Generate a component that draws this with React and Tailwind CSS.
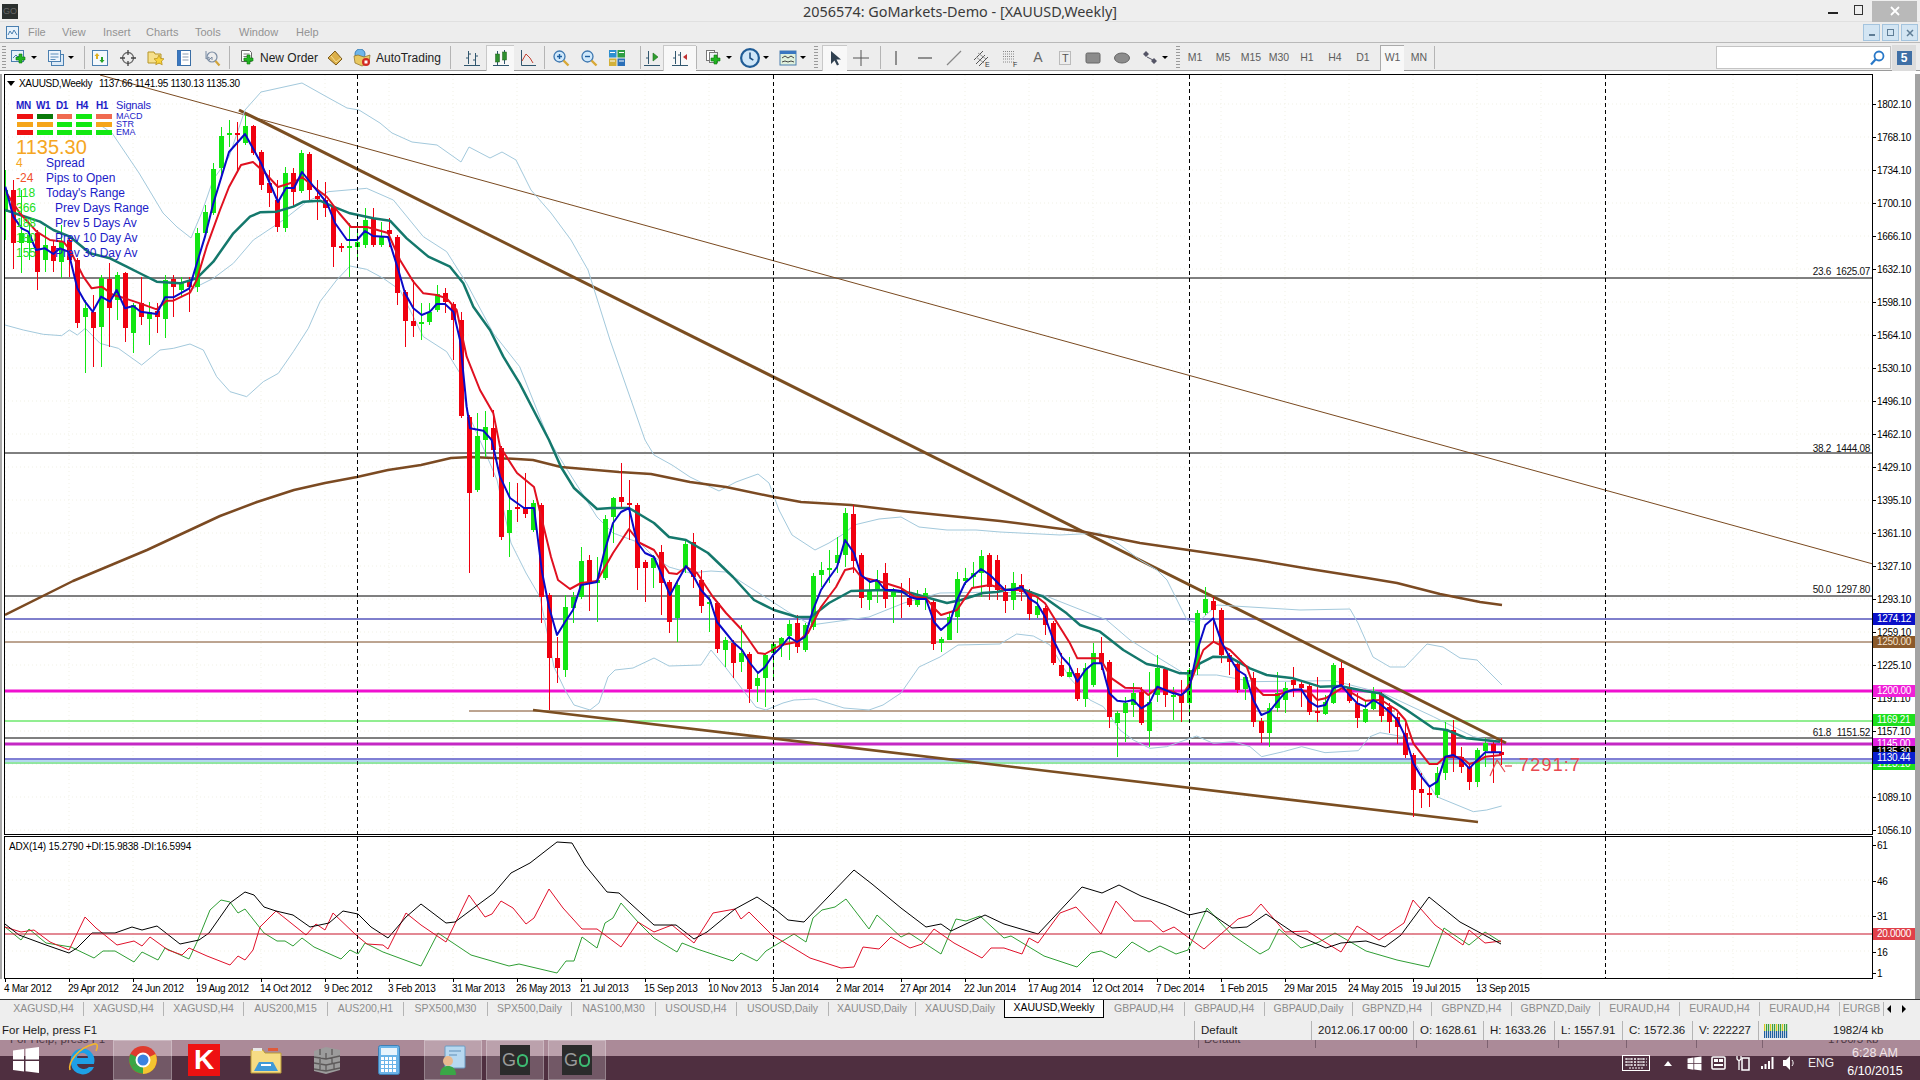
import React from "react";

const z10 = (a) => a.map(([x, y]) => [x / 3, 180 + y / 3]);
const z11 = (a) => a.map(([x, y]) => [1000 + x / 3, 560 + y / 3]);

const CANDLES = [
[1,190,212,170,240],[0,190,243,180,269],[1,233,243,190,273],[1,235,243,225,260],[0,233,272,230,290],[1,245,260,227,272],[0,246,261,240,272],[1,242,262,225,278],
[0,240,260,237,277],[0,260,323,258,328],[1,308,317,300,373],[0,312,328,295,367],[1,278,327,275,367],[0,279,308,263,347],[1,275,300,272,320],[0,273,328,272,342],
[1,305,333,303,353],[0,303,317,277,325],[1,312,319,302,345],[0,311,317,303,333],[1,280,319,275,338],[0,279,287,275,317],[1,282,290,277,297],[0,282,287,277,312],
[1,233,287,228,292],[1,212,233,205,235],[1,169,213,163,215],[1,136,168,127,179],[1,133,135,120,147],[0,133,135,122,170],[1,126,143,115,145],[0,126,153,125,155],
[0,152,185,150,190],[0,183,193,170,207],[0,200,227,180,232],[1,173,228,167,232],[0,173,192,168,207],[1,153,191,150,193],[0,154,190,152,200],[0,196,199,180,220],
[0,200,208,182,217],[0,207,247,205,267],[0,246,248,243,252],[1,246,248,223,277],[1,242,247,223,260],[1,220,245,208,248],[0,218,245,208,247],[1,237,245,222,247],
[0,230,234,218,247],[0,237,293,235,305],[0,292,321,290,347],[0,321,326,280,337],[1,322,323,303,340],[1,312,322,303,325],[1,294,310,285,312],[0,293,302,288,313],
[0,304,320,302,360],[0,320,416,312,418],[0,417,493,415,573],[1,436,490,413,492],[1,427,440,411,457],[0,428,450,410,477],[0,448,537,446,540],[1,510,533,482,557],
[0,507,509,483,522],[0,507,514,473,518],[1,503,530,500,532],[0,505,597,503,623],[0,595,658,593,710],[0,658,668,637,683],[1,607,670,595,677],[1,597,608,592,623],
[1,561,597,547,599],[0,560,583,555,611],[1,580,583,557,622],[1,519,578,515,580],[1,498,517,497,543],[0,497,502,463,507],[0,503,504,480,540],[0,505,568,503,590],
[0,562,568,560,602],[1,558,568,555,588],[0,552,583,545,615],[0,582,622,580,633],[1,585,618,580,642],[1,544,568,540,573],[0,542,577,533,588],[0,580,606,570,613],
[1,602,604,597,632],[0,603,649,601,653],[1,640,650,637,667],[0,643,663,640,678],[1,653,662,625,672],[0,654,689,652,703],[1,678,686,673,702],[1,655,678,653,707],
[1,644,653,643,677],[1,638,646,637,657],[1,624,636,620,660],[0,623,647,615,653],[1,625,650,623,652],[1,576,627,573,630],[1,570,575,562,587],[1,568,569,550,583],
[1,555,563,537,573],[1,513,555,508,567],[0,514,561,505,573],[0,555,598,553,608],[1,590,600,578,610],[1,580,590,570,603],[0,573,599,563,608],[1,590,597,588,623],
[0,590,592,583,618],[0,598,605,578,607],[1,600,605,590,607],[1,593,598,588,610],[0,602,644,600,650],[1,639,643,637,652],[1,617,640,613,640],[1,579,617,572,633],
[1,578,581,568,585],[1,573,577,562,587],[1,556,573,550,597],[0,555,587,553,600],[0,560,590,555,600],[0,592,601,585,613],[1,583,600,572,610],[0,585,592,574,601],
[0,591,614,589,620],[1,606,615,595,618],[0,608,625,606,635],[0,623,663,621,665],[0,665,676,653,677],[1,672,677,657,677],[0,673,699,668,701],[1,668,699,663,707],
[1,653,685,643,687],[0,653,663,637,670],[0,662,717,660,728],[1,713,723,711,757],[1,703,713,697,742],[1,693,705,683,717],[0,692,723,687,725],[1,702,731,672,747],
[1,668,695,655,702],[0,669,695,667,707],[1,695,697,687,720],[0,695,703,680,722],[1,670,703,668,713],[1,613,669,610,675],[1,599,613,587,615],[0,601,610,597,642],
[0,610,655,608,663],[0,655,662,653,675],[0,664,690,663,693],[1,677,689,675,700],[0,678,722,672,727],[0,721,733,718,743],[1,708,733,703,747],[1,693,708,672,712],
[1,688,700,682,713],[0,680,685,667,697],[0,684,688,682,707],[0,686,712,683,715],[0,711,712,677,722],[1,702,714,695,715],[1,665,703,663,704],[0,668,685,662,687],
[0,687,701,683,703],[0,703,718,693,728],[1,709,722,700,723],[1,693,709,687,710],[0,694,716,692,722],[0,707,722,703,733],[0,717,727,713,744],[0,733,755,723,758],
[0,755,790,753,817],[0,789,793,773,808],[0,793,795,787,807],[1,773,795,767,798],[1,730,773,722,780],[0,730,757,720,772],[0,757,767,747,773],[0,767,782,763,790],
[1,750,782,748,787],[1,743,751,738,767],[0,744,752,742,783],[0,752,755,738,765],
];

const BLUE = [
...z10([[16,20],[40,110],[65,145],[85,155],[108,210],[135,205],[160,222],[180,205],[205,215],[232,325],[255,365],[278,395],[303,350],[330,365],[350,330],[375,385],[400,378],[422,395],[470,402],[495,352],[520,352],[568,325],[592,245],[615,170],[640,70]]),
[229,152],[245,134],[261,163],[278,202],[286,188],[294,188],[302,172],[310,182],[327,203],[335,223],[347,240],[357,240],[365,231],[373,236],[388,237],
...z10([[1195,270],[1215,340],[1240,385],[1265,405],[1290,395],[1310,372],[1335,372],[1360,395],[1380,480],[1400,680],[1410,745],[1450,752],[1475,780],[1500,890]]),
[510,498],[524,508],[534,508],[542,572],[549,607],[557,635],[565,622],[573,610],[581,585],[597,582],[604,553],[613,523],[621,512],[629,508],[637,542],[645,553],[654,557],[661,573],[670,595],[677,582],[686,566],[694,577],[701,590],[710,600],[717,622],[726,633],[734,643],[742,650],[750,663],[758,673],[765,667],[773,655],[781,647],[789,637],[797,642],[805,637],[813,610],[821,590],[829,578],[837,567],[845,540],[854,553],[861,575],[870,582],[877,580],[885,590],[894,590],[901,591],[910,597],[917,599],[926,599],[934,622],[941,630],[950,622],[957,600],[965,583],[974,575],[981,569],[990,575],[997,582],
...z11([[15,90],[40,90],[65,80],[87,115],[111,130],[135,170],[160,240],[185,290],[208,315],[232,365],[256,330],[280,310],[304,310],[328,400],[352,422],[376,425],[400,420],[424,445],[448,430],[472,380],[496,390],[520,400],[544,405],[568,385],[592,270],[616,195],[640,175],[664,245],[688,290],[712,330],[736,345],[760,420],[784,465],[808,455],[832,425],[856,397],[880,390],[904,388],[928,425],[952,440],[976,435],[1000,385],[1024,375],[1048,405],[1072,430],[1096,440],[1120,420],[1144,435],[1168,455],[1192,480],[1216,530],[1240,610],[1264,650],[1288,680],[1312,665],[1336,590],[1360,585],[1384,600],[1408,625],[1432,600],[1456,577],[1504,577]]),
];

const RED = [
...z10([[20,40],[60,100],[110,155],[150,180],[190,185],[210,210],[250,290],[275,325],[305,320],[340,345],[375,355],[420,370],[470,388],[500,362],[520,362],[570,338],[590,300],[620,200],[660,90]]),
[229,187],[241,165],[253,162],[265,173],[278,187],[294,182],[302,177],[314,187],[327,197],[339,213],[351,227],[367,227],[388,233],
...z10([[1200,240],[1240,305],[1270,340],[1310,345],[1340,355],[1370,390],[1400,530],[1440,630],[1480,700],[1500,800]]),
[517,473],[534,487],[542,520],[551,557],[558,580],[570,589],[581,583],[597,581],[613,553],[629,529],[640,543],[654,550],[669,573],[677,574],[686,567],[697,573],[713,597],[726,613],[742,630],[758,653],[765,654],[781,645],[797,642],[808,633],[821,607],[836,587],[845,570],[854,568],[861,577],[885,583],[901,588],[915,597],[926,598],[934,608],[941,615],[957,610],[972,588],[990,585],[997,587],
...z11([[15,90],[60,90],[110,110],[135,130],[160,170],[210,250],[232,295],[300,295],[335,355],[375,383],[420,385],[445,405],[470,385],[520,395],[544,410],[570,370],[610,270],[640,245],[690,270],[740,320],[760,375],[790,405],[832,405],[880,388],[928,395],[952,420],[976,415],[1024,385],[1048,395],[1096,422],[1144,420],[1190,450],[1216,480],[1240,550],[1288,612],[1312,612],[1336,590],[1384,592],[1408,612],[1432,605],[1456,590],[1504,585]]),
];

const TEAL = [
...z10([[15,90],[60,105],[120,125],[160,150],[210,170],[270,220],[330,235],[380,260],[430,285],[470,305],[540,310],[590,295],[640,245],[700,160],[750,110],[780,97],[830,95],[880,80],[910,65],[960,62],[1000,80],[1050,100],[1120,115],[1170,122],[1220,175],[1285,230],[1350,260],[1390,310],[1420,380],[1470,450],[1510,530],[1559,610]]),
[549,440],[561,467],[574,488],[597,509],[611,508],[629,508],[654,523],[669,537],[686,540],[708,553],[733,577],[754,600],[774,610],[797,617],[811,617],[829,603],[851,591],[883,590],[911,593],[947,603],[961,600],[983,593],[997,592],
...z11([[15,90],[60,85],[130,110],[200,160],[240,195],[300,215],[370,270],[440,312],[490,322],[540,340],[570,340],[600,310],[640,290],[690,292],[750,325],[800,345],[880,355],[960,380],[1020,378],[1090,392],[1140,400],[1220,450],[1300,505],[1340,510],[1400,535],[1500,545]]),
];

const MA = [[5,615],[73,581],[147,550],[220,516],[257,502],[294,490],[325,483],[357,477],[388,470],[421,465],[451,458],[471,457],[517,459],[533,460],[561,467],[619,472],[651,474],[690,482],[726,487],[774,497],[801,502],[851,505],[901,511],[1000,521],[1085,532],[1140,543],[1257,560],[1310,569],[1367,578],[1397,583],[1440,594],[1480,602],[1502,605]];

const UPPER = [[100,125],[112,133],[139,173],[163,213],[177,227],[191,238],[202,212],[213,180],[229,157],[245,110],[261,92],[302,83],[327,97],[347,108],[359,110],[380,123],[392,133],[412,142],[437,145],[461,162],[469,147],[490,158],[502,152],[516,160],[531,190],[551,213],[571,240],[588,270],[610,340],[645,440],[654,455],[672,465],[690,477],[719,491],[736,482],[758,474],[769,483],[779,510],[792,535],[815,550],[829,543],[845,533],[854,525],[879,519],[901,517],[919,527],[947,530],[976,530],[1000,532],[1060,535],[1100,533],[1120,545],[1140,560],[1157,570],[1167,580],[1187,620],[1197,623],[1217,605],[1267,608],[1300,610],[1350,609],[1358,623],[1373,657],[1390,667],[1405,667],[1427,644],[1443,647],[1460,658],[1477,660],[1490,673],[1502,685]];

const MIDDLE = [
...z10([[570,330],[640,295],[700,250],[760,180],[850,120],[920,65],[985,35],[1100,25],[1180,60],[1270,170],[1340,215],[1400,310],[1480,460],[1559,560]]),
[549,440],[563,463],[597,517],[613,533],[640,543],[654,557],[669,567],[690,573],[711,571],[726,572],[754,590],[790,613],[811,625],[869,617],[904,603],[940,593],[1000,592],
...z11([[130,105],[320,180],[390,240],[470,290],[560,345],[650,345],[760,365],[1000,362],[1150,400],[1300,470],[1420,530],[1500,545]]),
];

const LOWER = [
...z10([[15,435],[70,450],[130,463],[185,467],[208,450],[232,465],[256,445],[300,490],[355,505],[425,555],[480,510],[520,505],[570,492],[610,510],[650,590],[690,635],[740,650],[790,605],[835,580],[880,515],[925,445],[960,365],[1010,300],[1050,258],[1100,268],[1150,295],[1200,330],[1270,470],[1340,515],[1380,580],[1400,690],[1470,850]]),
[497,480],[511,543],[526,573],[540,597],[554,667],[565,690],[574,705],[590,710],[599,703],[608,677],[615,670],[633,668],[654,658],[669,666],[701,665],[711,650],[726,668],[756,707],[766,710],[783,703],[794,700],[815,699],[844,708],[869,710],[883,705],[901,693],[919,667],[940,657],[958,645],[1000,644],
...z11([[50,222],[100,228],[150,255],[210,355],[270,420],[310,440],[360,510],[400,540],[450,565],[500,560],[590,528],[640,550],[700,545],[750,560],[785,590],[850,575],[905,560],[975,578],[1075,572],[1110,530],[1140,518],[1210,530],[1240,600],[1310,710],[1420,755],[1460,750],[1505,738]]),
];

const ADX_BLACK = [[5,924],[19,935],[46,945],[69,953],[77,948],[92,933],[115,933],[132,927],[142,930],[157,926],[180,944],[199,940],[209,933],[230,903],[245,892],[254,895],[264,907],[276,911],[293,915],[310,927],[329,923],[343,911],[358,914],[371,927],[388,938],[406,917],[421,904],[446,923],[455,922],[475,907],[494,893],[511,873],[530,863],[557,842],[572,843],[585,865],[607,892],[619,893],[654,925],[676,925],[694,939],[707,932],[735,909],[757,897],[776,910],[788,920],[804,922],[854,870],[872,884],[901,908],[926,927],[941,924],[951,931],[985,915],[1004,924],[1038,934],[1082,887],[1102,893],[1119,885],[1141,896],[1166,905],[1189,915],[1207,911],[1232,928],[1247,927],[1266,914],[1297,935],[1326,948],[1341,943],[1366,941],[1385,947],[1401,935],[1429,897],[1460,922],[1501,944]];
const ADX_RED = [[5,927],[21,932],[34,930],[50,942],[69,950],[85,917],[96,928],[117,945],[134,941],[142,946],[150,937],[168,950],[182,955],[189,948],[207,956],[230,965],[238,956],[245,960],[253,950],[260,927],[276,911],[306,935],[316,924],[325,930],[333,913],[356,935],[367,944],[383,945],[388,949],[406,913],[421,925],[446,942],[469,895],[485,917],[492,914],[501,901],[513,908],[526,924],[534,918],[549,889],[563,908],[582,929],[597,929],[621,947],[638,922],[654,932],[672,925],[694,943],[713,913],[735,909],[741,919],[749,912],[772,935],[810,958],[841,968],[854,967],[863,947],[879,949],[891,937],[910,948],[922,944],[934,929],[954,943],[982,958],[991,948],[1004,948],[1022,954],[1029,938],[1038,943],[1060,913],[1076,907],[1101,934],[1116,901],[1134,921],[1151,921],[1163,932],[1174,927],[1204,949],[1238,919],[1251,915],[1261,904],[1285,932],[1307,931],[1341,952],[1357,926],[1379,940],[1404,923],[1413,900],[1435,925],[1463,945],[1469,930],[1485,943],[1501,941]];
const ADX_GREEN = [[5,927],[21,940],[29,929],[46,943],[71,947],[94,958],[103,951],[115,951],[134,962],[142,952],[158,960],[165,948],[189,959],[197,942],[210,910],[221,900],[230,902],[238,913],[245,909],[264,933],[277,941],[285,941],[293,946],[302,938],[314,947],[341,959],[350,950],[358,954],[365,943],[383,952],[421,966],[438,933],[471,955],[509,966],[519,964],[557,973],[566,961],[574,961],[582,937],[597,948],[605,923],[613,918],[621,903],[638,922],[654,938],[677,952],[682,943],[697,949],[733,961],[741,953],[757,961],[766,951],[794,934],[806,942],[813,918],[822,910],[835,907],[846,899],[869,929],[877,915],[901,937],[909,933],[941,954],[956,919],[966,921],[980,916],[1004,938],[1011,936],[1044,956],[1077,967],[1091,953],[1101,951],[1116,958],[1132,942],[1149,952],[1160,946],[1176,954],[1188,950],[1207,908],[1232,935],[1260,954],[1269,949],[1279,929],[1301,948],[1319,942],[1335,933],[1366,951],[1397,960],[1429,967],[1444,928],[1469,945],[1485,932],[1501,942]];

const PRICES = ["1802.10","1768.10","1734.10","1700.10","1666.10","1632.10","1598.10","1564.10","1530.10","1496.10","1462.10","1429.10","1395.10","1361.10","1327.10","1293.10","1259.10","1225.10","1191.10","1157.10","1123.10","1089.10","1056.10"];
const DATES = ["4 Mar 2012","29 Apr 2012","24 Jun 2012","19 Aug 2012","14 Oct 2012","9 Dec 2012","3 Feb 2013","31 Mar 2013","26 May 2013","21 Jul 2013","15 Sep 2013","10 Nov 2013","5 Jan 2014","2 Mar 2014","27 Apr 2014","22 Jun 2014","17 Aug 2014","12 Oct 2014","7 Dec 2014","1 Feb 2015","29 Mar 2015","24 May 2015","19 Jul 2015","13 Sep 2015"];

const TABS = [
["XAGUSD,H4","w-[80px]"],["XAGUSD,H4","w-[80px]"],["XAGUSD,H4","w-[80px]"],["AUS200,M15","w-[84px]"],["AUS200,H1","w-[76px]"],["SPX500,M30","w-[84px]"],["SPX500,Daily","w-[84px]"],["NAS100,M30","w-[84px]"],
["USOUSD,H4","w-[81px]"],["USOUSD,Daily","w-[92px]"],["XAUUSD,Daily","w-[87px]"],["XAUUSD,Daily","w-[88px]"],["XAUUSD,Weekly","w-[100px]",true],
["GBPAUD,H4","w-[81px]"],["GBPAUD,H4","w-[80px]"],["GBPAUD,Daily","w-[88px]"],["GBPNZD,H4","w-[79px]"],["GBPNZD,H4","w-[80px]"],["GBPNZD,Daily","w-[88px]"],["EURAUD,H4","w-[80px]"],["EURAUD,H4","w-[80px]"],["EURAUD,H4","w-[80px]"],["EURGB","w-[44px]"],
];

const Line = ({ pts, stroke, w = 1 }) => (
  <polyline points={pts.map((p) => p.join(",")).join(" ")} fill="none" stroke={stroke} strokeWidth={w} strokeLinejoin="round" />
);
const HL = ({ y, c, w = 1, x1 = 4, x2 = 1873 }) => <line x1={x1} x2={x2} y1={y} y2={y} stroke={c} strokeWidth={w} />;
const VDash = ({ y1, y2 }) => (
  <>
    {[357.5, 773.5, 1189.5, 1605.5].map((x) => (
      <line key={x} x1={x} x2={x} y1={y1} y2={y2} stroke="#000" strokeDasharray="4 3" />
    ))}
  </>
);
const Grid = ({ y1, y2, ys }) => (
  <g stroke="#f1f1e6" strokeDasharray="1 3">
    {Array.from({ length: 29 }, (_, i) => (
      <line key={i} x1={5 + 64 * i} x2={5 + 64 * i} y1={y1} y2={y2} />
    ))}
    {ys.map((y) => (
      <line key={y} x1={4} x2={1873} y1={y} y2={y} />
    ))}
  </g>
);

const FIBS = [["23.6","1625.07",275],["38.2","1444.08",452],["50.0","1297.80",593],["61.8","1151.52",736]];

function MainChart() {
  return (
    <svg viewBox="5 75 1867 759" className="w-full h-full block">
      <Grid y1={75} y2={834} ys={PRICES.map((_, i) => 104 + 33 * i)} />
      <HL y={278} c="#000" />
      <HL y={453} c="#000" />
      <HL y={596} c="#000" />
      <HL y={619} c="#00009a" />
      <HL y={642} c="#7b4a22" />
      <HL y={691} c="#f010d0" w={3} />
      <HL y={711} c="#7b4a22" x1={469} x2={1395} />
      <HL y={721} c="#25dd25" />
      <HL y={738} c="#000" />
      <HL y={744} c="#c428c4" w={3} />
      <HL y={759} c="#0000aa" />
      <HL y={761} c="#6ab0e0" />
      <HL y={763} c="#25cc45" />
      <line x1={100} y1={75} x2={1873} y2={564} stroke="#7a4a20" strokeWidth={1} />
      <line x1={239} y1={110} x2={1506} y2={743} stroke="#7b4e21" strokeWidth={3} />
      <line x1={533} y1={710} x2={1478} y2={822} stroke="#7b4e21" strokeWidth={2.6} />
      <g strokeWidth={1}>
        <Line pts={UPPER} stroke="#a3c9dc" />
        <Line pts={MIDDLE} stroke="#a3c9dc" />
        <Line pts={LOWER} stroke="#a3c9dc" />
      </g>
      <Line pts={MA} stroke="#7b4a22" w={2.5} />
      <g shapeRendering="crispEdges">
        {CANDLES.map(([g, t, b, h, l], i) => {
          const x = 5 + 8 * i;
          const c = g ? "#12e612" : "#f00010";
          return (
            <g key={i}>
              <line x1={x + 0.5} x2={x + 0.5} y1={h} y2={l} stroke={c} />
              <rect x={x - 2} y={t} width={5} height={Math.max(b - t, 1.5)} fill={c} />
            </g>
          );
        })}
      </g>
      <Line pts={TEAL} stroke="#14786c" w={2.5} />
      <Line pts={RED} stroke="#e01020" w={2} />
      <Line pts={BLUE} stroke="#0a0ac8" w={2} />
      <polyline points="1490,776 1497,760 1505,772" fill="none" stroke="#e8484f" strokeWidth={1.2} />
      <line x1={1505} x2={1512} y1={766} y2={766} stroke="#e8484f" strokeWidth={1.2} />
      <text x={1519} y={771} fontSize={18} letterSpacing={1.2} fill="#e8484f">7291:7</text>
      <VDash y1={75} y2={834} />
      {FIBS.map(([a, b, y]) => (
        <g key={a} fontSize={10} letterSpacing={-0.3} fill="#111">
          <text x={1870} y={y} textAnchor="end">{b}</text>
          <text x={1831} y={y} textAnchor="end">{a}</text>
        </g>
      ))}
    </svg>
  );
}

function AdxChart() {
  return (
    <svg viewBox="5 837 1867 141" className="w-full h-full block">
      <Grid y1={837} y2={978} ys={[880, 916, 951]} />
      <Line pts={ADX_GREEN} stroke="#2f9e34" />
      <Line pts={ADX_RED} stroke="#e0102a" />
      <Line pts={ADX_BLACK} stroke="#000" />
      <HL y={934} c="#c8142a" w={1.2} />
      <VDash y1={837} y2={978} />
    </svg>
  );
}

const BOXES = [
  ["bg-[#ee1111]","bg-[#0a7a0a]","bg-[#f06a50]","bg-[#12e812]","bg-[#f06a50]"],
  ["bg-[#f5a51a]","bg-[#f5a51a]","bg-[#12e812]","bg-[#12e812]","bg-[#f5a51a]"],
  ["bg-[#ee1111]","bg-[#12e812]","bg-[#12e812]","bg-[#12e812]","bg-[#12e812]"],
];
const STATS = [
  ["4","text-[#f5a623]","Spread",""],
  ["-24","text-[#f0502a]","Pips to Open",""],
  ["118","text-[#22e022]","Today's Range",""],
  ["366","text-[#22e022]","Prev Days Range","pl-[9px]"],
  ["188","text-[#22e022]","Prev 5 Days Av","pl-[9px]"],
  ["180","text-[#22e022]","Prev 10 Day Av","pl-[9px]"],
  ["155","text-[#22e022]","Prev 30 Day Av","pl-[9px]"],
];

function Legend() {
  return (
    <div className="absolute left-[2px] top-0 w-[260px] pointer-events-none">
      <div className="flex items-center h-[16px] text-[10px] tracking-[-0.3px] text-black">
        <span className="mr-[4px] w-0 h-0 border-x-[4px] border-x-transparent border-t-[5px] border-t-black" />
        <span className="w-[80px]">XAUUSD,Weekly</span>
        <span>1137.66 1141.95 1130.13 1135.30</span>
      </div>
      <div className="pl-[9px] mt-[8px] text-[#1c1cc8]">
        <div className="flex items-center h-[13px] text-[10px]">
          {["MN","W1","D1","H4","H1"].map((t) => (
            <span key={t} className="w-[20px] font-bold tracking-[-0.4px]">{t}</span>
          ))}
          <span className="text-[11px] tracking-[-0.2px]">Signals</span>
        </div>
        {BOXES.map((row, r) => (
          <div key={r} className="flex items-center h-[8px]">
            <div className="flex w-[100px] pl-[1px]">
              {row.map((c, i) => (
                <span key={i} className={`w-[16px] h-[5px] mr-[4px] ${c}`} />
              ))}
            </div>
            <span className="text-[9px] leading-[8px]">{["MACD","STR","EMA"][r]}</span>
          </div>
        ))}
      </div>
      <div className="pl-[9px] text-[20px] leading-[22px] text-[#f5a623]">1135.30</div>
      <div className="pl-[9px] -mt-[3px] text-[12px]">
        {STATS.map(([v, c, l, p]) => (
          <div key={l} className="flex items-center h-[15px]">
            <span className={`w-[30px] ${c}`}>{v}</span>
            <span className={`text-[#1c1cc8] ${p}`}>{l}</span>
          </div>
        ))}
      </div>
    </div>
  );
}

const PriceTag = ({ top, bg, fg = "text-white", children }) => (
  <div className={`absolute left-0 w-[42px] h-[12px] pl-[4px] text-[10px] leading-[12px] tracking-[-0.3px] ${top} ${bg} ${fg}`}>{children}</div>
);

function PriceAxis() {
  return (
    <div className="relative h-full w-[42px] bg-white text-[10px] tracking-[-0.3px] text-black">
      <div className="pt-[13.5px]">
        {PRICES.map((p) => (
          <div key={p} className="flex items-center h-[33px]">
            <span className="w-[3px] h-px bg-black mr-[1px]" />
            <span>{p}</span>
          </div>
        ))}
      </div>
      <PriceTag top="top-[539px]" bg="bg-[#0a10c8]">1274.12</PriceTag>
      <PriceTag top="top-[562px]" bg="bg-[#8b5a2b]" fg="text-[#f3e4d0]">1250.00</PriceTag>
      <PriceTag top="top-[611px]" bg="bg-[#f01fd8]">1200.00</PriceTag>
      <PriceTag top="top-[640px]" bg="bg-[#1ee01e]">1169.21</PriceTag>
      <PriceTag top="top-[664px]" bg="bg-[#e020e0]">1145.00</PriceTag>
      <PriceTag top="top-[672px]" bg="bg-[#000]">1135.30</PriceTag>
      <PriceTag top="top-[684px]" bg="bg-[#1ee01e]">1123.10</PriceTag>
      <PriceTag top="top-[678px]" bg="bg-[#0a1fd0]">1130.44</PriceTag>
    </div>
  );
}

function AdxAxis() {
  return (
    <div className="relative flex flex-col h-full w-[42px] text-[10px] tracking-[-0.3px] text-black">
      <div className="-mt-[8px]">
        {["61","46","31","16"].map((p) => (
          <div key={p} className="flex items-center h-[35.5px]">
            <span className="w-[3px] h-px bg-black mr-[1px]" />
            <span>{p}</span>
          </div>
        ))}
        <div className="flex items-center h-[6px]">
          <span className="w-[3px] h-px bg-black mr-[1px]" />
          <span>1</span>
        </div>
      </div>
      <PriceTag top="top-[92px]" bg="bg-[#e0404a]">20.0000</PriceTag>
    </div>
  );
}

/* ---------- toolbar icons ---------- */
const Svg = ({ s = 18, children }) => (
  <svg width={s} height={s} viewBox="0 0 18 18" className="block shrink-0">{children}</svg>
);
const Plus = ({ x = 9, y = 9 }) => (
  <path d={`M${x + 3} ${y}h3v3h3v3h-3v3h-3v-3h-3v-3h3z`} fill="#22b422" stroke="#0c7a0c" strokeWidth=".6" />
);
const Caret = () => <span className="w-0 h-0 border-x-[3px] border-x-transparent border-t-[3px] border-t-black" />;
const IconNewChart = () => (
  <Svg><rect x="1.5" y="1.5" width="12" height="11" fill="#e8f2fb" stroke="#4a7fb0" /><path d="M3 9l3-3 2 2 3-3" stroke="#4a7fb0" fill="none" /><Plus x={6} y={5} /></Svg>
);
const IconProfile = () => (
  <Svg><rect x="4.5" y="5.5" width="12" height="11" fill="#dceaf7" stroke="#4a7fb0" /><rect x="1.5" y="1.5" width="12" height="11" fill="#eef5fc" stroke="#4a7fb0" /><path d="M3.5 5h8M3.5 8h8M3.5 10.5h5" stroke="#5c8dbb" /></Svg>
);
const IconMarket = () => (
  <Svg><rect x="1.5" y="1.5" width="15" height="15" fill="#f4f9fd" stroke="#4a7fb0" /><path d="M6 4l2.5 3h-1.5v3H5V7H3.5z" fill="#e0b020" /><path d="M11 14l-2.5-3H10V8h2v3h1.5z" fill="#27a327" /></Svg>
);
const IconNav = () => (
  <Svg><circle cx="9" cy="9" r="5.5" fill="none" stroke="#666" strokeWidth="1.3" /><path d="M9 1v5M9 12v5M1 9h5M12 9h5" stroke="#444" strokeWidth="1.3" /></Svg>
);
const IconStar = () => (
  <Svg><path d="M1 3h6l1 2h6v9H1z" fill="#f6e08c" stroke="#b59528" /><path d="M12 6l1.6 3.4 3.4.4-2.5 2.4.7 3.6-3.2-1.8-3.2 1.8.7-3.6L7 9.800l3.4-.4z" fill="#f8d33c" stroke="#b38a14" strokeWidth=".7" /></Svg>
);
const IconData = () => (
  <Svg><rect x="2.500" y="1.500" width="13" height="15" fill="#fff" stroke="#3a6ea5" /><rect x="2.500" y="1.500" width="3.500" height="15" fill="#3a77c0" /><path d="M7.500 5h6M7.500 8h6M7.500 11h6" stroke="#8a9bb0" /></Svg>
);
const IconTester = () => (
  <Svg><path d="M3 2v8l3-2v3l3-3v3" stroke="#7a8aa0" fill="#e8eef6" strokeWidth="1" /><circle cx="9" cy="8" r="5" fill="none" stroke="#7c8da3" strokeWidth="1.2" /><path d="M12.500 12l4 4.500" stroke="#d2a43a" strokeWidth="2.200" /></Svg>
);
const IconOrder = () => (
  <Svg><path d="M3.500 1.500h8l2 2v9h-10z" fill="#fff" stroke="#666" /><path d="M5.500 5h6M5.500 7.500h6M5.500 10h4" stroke="#777" /><Plus x={6} y={6} /></Svg>
);
const IconGold = () => (
  <Svg><path d="M9 2l7 8-6 6-8-7z" fill="#dcb04a" stroke="#7d5a18" /><path d="M5 7l5 6 5-4" fill="none" stroke="#f5e09a" /></Svg>
);
const IconAuto = () => (
  <Svg><circle cx="7" cy="5" r="5" fill="#6fb6ea" stroke="#3d7fb5" /><path d="M1 7l4-1 6 2 6-2-1 8-7 3-7-3z" fill="#e8c861" stroke="#8a6a20" strokeWidth=".7" /><circle cx="13" cy="13" r="4" fill="#d22a22" /><rect x="11.500" y="11.500" width="3" height="3" fill="#fff" /></Svg>
);
const IconBars = () => (
  <Svg><path d="M5.500 2v13M3 9h2.500M5.500 5H8M12.500 4v13M10 11h2.500M12.500 7H15M1 16.500h16" stroke="#30566e" fill="none" /></Svg>
);
const IconCandle = () => (
  <Svg><path d="M5.500 2v14M12.500 1v14M1 16.500h16" stroke="#30566e" /><rect x="3.500" y="5" width="4" height="8" fill="#2e8f2e" stroke="#1f5f1f" strokeWidth=".5" /><rect x="10.500" y="3" width="4" height="8" fill="#2e8f2e" stroke="#1f5f1f" strokeWidth=".5" /></Svg>
);
const IconLineChart = () => (
  <Svg><path d="M2.500 1v15.500H17" stroke="#30566e" fill="none" /><path d="M3 12l4-7 4 4 3 5" stroke="#c04030" fill="none" /></Svg>
);
const IconZoom = ({ plus }) => (
  <Svg><circle cx="7.500" cy="7.500" r="5.500" fill="#cfe8fb" stroke="#3f78b0" strokeWidth="1.300" /><path d={plus ? "M5 7.500h5M7.500 5v5" : "M5 7.500h5"} stroke="#1f5fa0" strokeWidth="1.400" /><path d="M11.500 11.500l5 5" stroke="#d8a836" strokeWidth="2.400" /></Svg>
);
const IconTile = () => (
  <Svg><rect x="1" y="1" width="7.500" height="7.500" fill="#2e8fd0" /><rect x="9.500" y="1" width="7.500" height="7.500" fill="#2f9e44" /><rect x="1" y="9.500" width="7.500" height="7.500" fill="#d2b13a" /><rect x="9.500" y="9.500" width="7.500" height="7.500" fill="#2a6fb8" /><path d="M2 3.500h5M11 3.500h5M2 12h5M11 12h5" stroke="#fff" /></Svg>
);
const IconShift = () => (
  <Svg><path d="M5.500 2v13M3 9h2.500M1 16.500h16" stroke="#30566e" fill="none" /><path d="M10 4v8l5-4z" fill="#2e9e2e" stroke="#1b6e1b" strokeWidth=".6" /></Svg>
);
const IconAutoScroll = () => (
  <Svg><path d="M4.500 2v13M2 9h2.500M9.500 3v13M7 6h2.500M1 16.500h16" stroke="#30566e" fill="none" /><path d="M16 5v6l-4-3z" fill="#c03030" /></Svg>
);
const IconAddInd = () => (
  <Svg><rect x="1.500" y="1.500" width="8" height="10" fill="#fff" stroke="#777" /><rect x="4.500" y="3.500" width="8" height="10" fill="#eef2f6" stroke="#777" /><Plus x={6} y={6} /></Svg>
);
const IconClock = () => (
  <Svg s={20}><circle cx="9" cy="9" r="8" fill="#cfe6f8" stroke="#1f5c96" strokeWidth="2" /><path d="M9 4v5l3 2" stroke="#1f4f80" strokeWidth="1.400" fill="none" /></Svg>
);
const IconTemplate = () => (
  <Svg><rect x="1" y="2" width="16" height="14" fill="#dff0dc" stroke="#4a7fb0" /><rect x="1" y="2" width="16" height="3" fill="#3a77c0" /><path d="M3 9l3-2 3 2 3-2 3 2M3 13l3-1 3 1 3-1 3 1" stroke="#444" fill="none" /></Svg>
);
const IconCursor = () => <Svg><path d="M5 2v13l3.500-3.500 2.500 5 2-1-2.500-5H15z" fill="#304050" /></Svg>;
const IconCross = () => <Svg><path d="M9 1v16M1 9h16" stroke="#555" /></Svg>;
const IconV = () => <Svg><path d="M9 2v14" stroke="#777" strokeWidth="1.600" /></Svg>;
const IconH = () => <Svg><path d="M2 9h14" stroke="#777" strokeWidth="1.600" /></Svg>;
const IconT = () => <Svg><path d="M2 16L16 2" stroke="#888" strokeWidth="1.300" /></Svg>;
const IconChannel = () => (
  <Svg><path d="M1 11l9-9M3 15l9-9M6 17l9-9" stroke="#555" fill="none" /><path d="M3 8l8 6M5 4l8 6" stroke="#999" /><text x="12" y="17.500" fontSize="7" fill="#333">E</text></Svg>
);
const IconFib = () => (
  <Svg><path d="M2 2.500h12M2 5h12M2 7.500h12M2 10h12M2 13h12" stroke="#888" strokeDasharray="1 1" /><text x="12" y="17.500" fontSize="7" fill="#333">F</text></Svg>
);
const IconLabel = () => (
  <Svg><rect x="3.500" y="2.500" width="11" height="13" fill="none" stroke="#888" strokeDasharray="1 1" /><text x="6" y="13" fontSize="11" fill="#555">T</text></Svg>
);
const IconRect = () => <Svg><rect x="2" y="4" width="14" height="10" rx="1.500" fill="#8c8c8c" stroke="#666" /></Svg>;
const IconEllipse = () => <Svg><ellipse cx="9" cy="9" rx="7.500" ry="5" fill="#8c8c8c" stroke="#666" /></Svg>;
const IconArrows = () => (
  <Svg><path d="M5 2l3 3-3 3-3-3zM13 9l3 3-3 3-3-3z" fill="#556" /><path d="M6 8l6 3" stroke="#556" /></Svg>
);

const Grip = () => <div className="w-[4px] h-[24px] shrink-0 bg-[repeating-linear-gradient(to_bottom,#9a9a9a_0_1px,transparent_1px_3px)]" />;
const Sep = () => <div className="w-px h-[23px] shrink-0 bg-[#b4b4b4]" />;
const Cell = ({ w, children, on }) => (
  <div className={`flex items-center justify-center h-[26px] shrink-0 ${w} ${on ? "bg-[#f8f8f8] border border-[#c8c8c8] border-b-0 border-r-0" : ""}`}>{children}</div>
);
const Drop = ({ w, pl, children }) => (
  <div className={`flex items-center h-[26px] shrink-0 gap-[3px] ${w} ${pl}`}>{children}<Caret /></div>
);
const Period = ({ w, on, children }) => (
  <div className={`flex items-center justify-center h-[26px] shrink-0 text-[10.500px] text-[#5d5d5d] ${w} ${on ? "bg-[#f8f8f8] border-l border-t border-[#aaa]" : ""}`}>{children}</div>
);

function Toolbar() {
  return (
    <div className="flex items-center h-[28px] pt-[2px] bg-[#ededed] border-b border-[#9a9a9a] shrink-0">
      <div className="w-[2px] shrink-0" /><Grip />
      <Drop w="w-[36px]" pl="pl-[4px]"><IconNewChart /></Drop>
      <Drop w="w-[36px]" pl="pl-[5px]"><IconProfile /></Drop>
      <div className="w-[6px] shrink-0" /><Sep />
      <div className="w-[1px] shrink-0" />
      <Cell w="w-[28px]"><IconMarket /></Cell>
      <Cell w="w-[28px]"><IconNav /></Cell>
      <Cell w="w-[28px]"><IconStar /></Cell>
      <Cell w="w-[28px]"><IconData /></Cell>
      <Cell w="w-[28px]"><IconTester /></Cell>
      <div className="w-[3px] shrink-0" /><Sep />
      <div className="flex items-center w-[90px] shrink-0 pl-[8px] gap-[4px] text-[12px] text-[#222]"><IconOrder /><span>New Order</span></div>
      <div className="w-[1px] shrink-0" />
      <Cell w="w-[28px]"><IconGold /></Cell>
      <Cell w="w-[26px]"><IconAuto /></Cell>
      <div className="w-[73px] shrink-0 pl-[1px] text-[12px] text-[#222]">AutoTrading</div>
      <div className="w-[2px] shrink-0" /><Sep />
      <div className="w-[7px] shrink-0" />
      <Cell w="w-[28px]"><IconBars /></Cell>
      <Cell w="w-[28px]" on><IconCandle /></Cell>
      <Cell w="w-[28px]"><IconLineChart /></Cell>
      <div className="w-[2px] shrink-0" /><Sep />
      <div className="w-[2px] shrink-0" />
      <Cell w="w-[28px]"><IconZoom plus /></Cell>
      <Cell w="w-[28px]"><IconZoom /></Cell>
      <Cell w="w-[28px]"><IconTile /></Cell>
      <div className="w-[9px] shrink-0" /><Sep />
      <Cell w="w-[22px]"><IconShift /></Cell>
      <Cell w="w-[33px]" on><IconAutoScroll /></Cell>
      <Sep />
      <Drop w="w-[38px]" pl="pl-[8px]"><IconAddInd /></Drop>
      <Drop w="w-[37px]" pl="pl-[5px]"><IconClock /></Drop>
      <Drop w="w-[38px]" pl="pl-[7px]"><IconTemplate /></Drop>
      <div className="w-[4px] shrink-0" /><Grip />
      <div className="w-[4px] shrink-0" />
      <Cell w="w-[25px]" on><IconCursor /></Cell>
      <Cell w="w-[28px]"><IconCross /></Cell>
      <div className="w-[5px] shrink-0" /><Sep />
      <Cell w="w-[30px]"><IconV /></Cell>
      <Cell w="w-[28px]"><IconH /></Cell>
      <Cell w="w-[30px]"><IconT /></Cell>
      <Cell w="w-[26px]"><IconChannel /></Cell>
      <Cell w="w-[30px]"><IconFib /></Cell>
      <div className="flex items-center justify-center w-[26px] shrink-0 text-[14px] text-[#666]">A</div>
      <Cell w="w-[28px]"><IconLabel /></Cell>
      <Cell w="w-[28px]"><IconRect /></Cell>
      <Cell w="w-[30px]"><IconEllipse /></Cell>
      <Drop w="w-[36px]" pl="pl-[4px]"><IconArrows /></Drop>
      <div className="w-[3px] shrink-0" /><Grip />
      <div className="w-[1px] shrink-0" />
      <Period w="w-[28px]">M1</Period>
      <Period w="w-[28px]">M5</Period>
      <Period w="w-[28px]">M15</Period>
      <Period w="w-[28px]">M30</Period>
      <Period w="w-[28px]">H1</Period>
      <Period w="w-[28px]">H4</Period>
      <Period w="w-[28px]">D1</Period>
      <div className="w-[3px] shrink-0" />
      <Period w="w-[24px]" on>W1</Period>
      <Period w="w-[30px]">MN</Period>
      <Sep />
      <div className="flex-1" />
      <div className="flex items-center justify-end w-[175px] h-[23px] pr-[5px] bg-white border border-[#c4c4c4]">
        <svg width="16" height="16" viewBox="0 0 16 16"><circle cx="10" cy="6" r="4.500" fill="none" stroke="#2878c8" strokeWidth="1.800" /><path d="M6.500 9.500L2 14.500" stroke="#2878c8" strokeWidth="2.200" /></svg>
      </div>
      <div className="flex items-center justify-center w-[24px] h-[26px] bg-[#dcdcdc] ml-[1px] mr-[4px]">
        <span className="flex items-center justify-center w-[15px] h-[14px] bg-[#3f6fa5] text-[12px] font-bold text-white">5</span>
      </div>
    </div>
  );
}

/* ---------- taskbar ---------- */
const TBtn = ({ w, on, children }) => (
  <div className={`flex items-center justify-center h-full shrink-0 ${w} ${on ? "bg-white/20 border border-white/25" : ""}`}>{children}</div>
);
const WinLogo = ({ s = 28, c = "#fff" }) => (
  <svg width={s} height={s} viewBox="0 0 28 28"><path d="M1 4.500l11-1.500v10.500H1zM13.500 2.800L27 1v12.500H13.500zM1 15h11v10.500L1 24zM13.500 15H27v12l-13.500-1.800z" fill={c} /></svg>
);
const GoTile = () => (
  <div className="flex items-center justify-center w-[30px] h-[30px] bg-[#2b2b2b] text-[18px] text-[#9a9a9a]">
    G<span className="w-[11px] h-[13px] rounded-full border-2 border-[#3dbb72] ml-[1px]" />
  </div>
);

const GHOST_SEPS = ["left-[1198px]","left-[1315px]","left-[1416px]","left-[1487px]","left-[1558px]","left-[1626px]","left-[1696px]","left-[1762px]"];

function Taskbar() {
  return (
    <div className="relative flex items-stretch h-[40px] shrink-0 overflow-hidden bg-[linear-gradient(to_bottom,#ab8a98_16px,#4f2f40_16px)] text-white">
      <div className="absolute left-[10px] -top-[9px] text-[11.500px] text-[#4d3944]">For Help, press F1</div>
      <div className="absolute left-[1204px] -top-[9px] text-[11.500px] text-[#4d3944]">Default</div>
      <div className="absolute left-[1828px] -top-[9px] text-[11.500px] text-[#4d3944]">1780/3 kb</div>
      {GHOST_SEPS.map((l) => <span key={l} className={`absolute top-0 w-px h-[8px] bg-[#7d6170] ${l}`} />)}
      <TBtn w="w-[52px]"><WinLogo /></TBtn>
      <TBtn w="w-[61px]">
        <svg width="34" height="36" viewBox="0 0 34 36">
          <path d="M5 22a12 12 0 1 1 23 0H11a7 6 0 0 0 12 3h5a12 12 0 0 1-23-3z M11 16h11a5.500 5 0 0 0-11 0z" fill="#1ea0e6" fillRule="evenodd" />
          <path d="M4 28C2 20 12 6 28 2c4-1 4 3 2 7" fill="none" stroke="#f4b52a" strokeWidth="1.600" />
        </svg>
      </TBtn>
      <TBtn w="w-[59px]" on>
        <svg width="30" height="30" viewBox="0 0 30 30">
          <circle cx="15" cy="15" r="14" fill="#e03a2e" />
          <path d="M15 15L3 22A14 14 0 0 1 2.500 9z" fill="#3aa646" />
          <path d="M15 15L27 22A14 14 0 0 1 3 22z" fill="#3aa646" />
          <path d="M15 15L27.500 9A14 14 0 0 1 15 29z" fill="#f4c430" />
          <circle cx="15" cy="15" r="6.500" fill="#3b82e0" stroke="#fff" strokeWidth="2" />
        </svg>
      </TBtn>
      <TBtn w="w-[64px]">
        <div className="flex items-center justify-center w-[32px] h-[32px] bg-[#ee1111] text-[28px] font-bold text-white">K</div>
      </TBtn>
      <TBtn w="w-[60px]">
        <svg width="32" height="32" viewBox="0 0 32 32">
          <path d="M1 6h12l2 3h16v20H1z" fill="#f6dc84" stroke="#b99a3a" />
          <rect x="3" y="4" width="9" height="3" fill="#e8e8e8" /><rect x="18" y="4" width="10" height="3" fill="#e05a3a" />
          <path d="M9 18h14l5 9H4z" fill="#3f9ad8" /><path d="M11 21h10" stroke="#fff" strokeWidth="2" />
        </svg>
      </TBtn>
      <TBtn w="w-[62px]">
        <svg width="30" height="30" viewBox="0 0 30 30">
          <path d="M2 6l12-4 14 3v20l-14 4-12-3z" fill="#9c9c9c" />
          <path d="M2 12l12 2 14-3M2 18l12 2 14-3M2 24l12 2 14-3M8 4v6M20 4v6M8 12v6M20 12v6M14 8v6M14 20v6M8 20v6M22 18v6" stroke="#5d5a5a" strokeWidth="1.300" fill="none" />
        </svg>
      </TBtn>
      <TBtn w="w-[62px]">
        <svg width="22" height="30" viewBox="0 0 22 30">
          <rect x=".5" y=".5" width="21" height="29" rx="2" fill="#6bb4e8" stroke="#3f7fb5" />
          <rect x="3" y="3" width="16" height="7" fill="#e8f4fc" />
          {[12, 16, 20, 24].map((y) => [3, 7, 11, 15].map((x) => <rect key={x + "-" + y} x={x} y={y} width="3" height="3" fill="#fff" />))}
        </svg>
      </TBtn>
      <div className="w-[4px] shrink-0" />
      <TBtn w="w-[58px]" on>
        <svg width="28" height="32" viewBox="0 0 28 32">
          <rect x="6" y="2" width="20" height="22" rx="1" fill="#b7d8f0" stroke="#6b9cc4" />
          <path d="M10 7h12M10 11h8" stroke="#5f8fb8" />
          <circle cx="9" cy="17" r="5" fill="#e9b98f" /><path d="M1 31c0-7 4-9 8-9s8 2 8 9z" fill="#3aa646" />
        </svg>
      </TBtn>
      <div className="w-[4px] shrink-0" />
      <TBtn w="w-[58px]" on><GoTile /></TBtn>
      <div className="w-[4px] shrink-0" />
      <TBtn w="w-[58px]" on><GoTile /></TBtn>
      <div className="flex-1" />
      <div className="flex items-center self-end h-[34px] gap-0 text-white pr-[18px]">
        <svg width="28" height="16" viewBox="0 0 28 16"><rect x=".5" y=".5" width="27" height="15" fill="#4f2f40" stroke="#fff" /><path d="M3 4h22M3 7h22M3 10h22M7 13h14M5 3v8M9 3v8M13 3v8M17 3v8M21 3v8" stroke="#fff" strokeDasharray="2 1" /></svg>
        <span className="ml-[14px] w-0 h-0 border-x-[4px] border-x-transparent border-b-[5px] border-b-white" />
        <span className="ml-[15px]"><WinLogo s={15} /></span>
        <svg className="ml-[9px]" width="15" height="14" viewBox="0 0 15 14"><rect x="1" y="1" width="13" height="12" rx="1" fill="none" stroke="#fff" strokeWidth="1.600" /><rect x="3" y="3" width="4" height="3" fill="#fff" /><rect x="8" y="3" width="4" height="3" fill="#fff" /><path d="M3 9h9" stroke="#fff" strokeWidth="2" /></svg>
        <svg className="ml-[9px]" width="16" height="16" viewBox="0 0 16 16"><rect x="7" y="3" width="7" height="12" fill="none" stroke="#fff" strokeWidth="1.500" /><path d="M2 1v3l2 2 2-2V1M4 6v9" stroke="#fff" strokeWidth="1.300" fill="none" /></svg>
        <svg className="ml-[9px]" width="14" height="12" viewBox="0 0 14 12"><path d="M1 9h2v3H1zM4.500 7h2v5h-2zM8 4h2v8H8zM11.500 0h2v12h-2z" fill="#fff" /></svg>
        <svg className="ml-[8px]" width="14" height="16" viewBox="0 0 14 16"><path d="M1 5h3l4-4v14l-4-4H1z" fill="#fff" /><path d="M10 5c1.500 2 1.500 4 0 6" stroke="#fff" fill="none" /></svg>
        <span className="ml-[12px] text-[12px] text-[#eee] w-[40px]">ENG</span>
        <div className="flex flex-col items-center -mt-[2px] w-[54px] text-[12.500px] leading-[18px]">
          <span className="text-[#f1e6ea]">6:28 AM</span>
          <span className="text-white">6/10/2015</span>
        </div>
      </div>
    </div>
  );
}

const StatusCell = ({ w, children }) => (
  <div className={`flex items-center h-full shrink-0 border-l border-[#b4b4b4] pl-[6px] ${w}`}>{children}</div>
);

export default function App() {
  return (
    <div className="flex flex-col w-[1920px] h-[1080px] overflow-hidden bg-white font-['Liberation_Sans',Arial,sans-serif]">
      {/* Title bar */}
      <div className="grid grid-cols-[1fr_auto_1fr] items-center h-[22px] shrink-0 bg-[#eeeeee] border-b border-[#e0e0e0]">
        <div className="pl-[2px]">
          <div className="flex items-center justify-center w-[16px] h-[15px] bg-[#2a2f2e] text-[9px] text-[#666]">GO</div>
        </div>
        <div className="pt-[1px] font-['Noto_Sans',sans-serif] text-[14.400px] text-[#3a3a3a]">2056574: GoMarkets-Demo - [XAUUSD,Weekly]</div>
        <div className="flex items-center justify-end h-full">
          <span className="w-[10px] h-[2px] bg-[#222] mt-[3px]" />
          <span className="relative ml-[16px] w-[9px] h-[10px] border border-[#333] -mt-[3px]" />
          <div className="flex items-center justify-center ml-[9px] mr-[3px] w-[45px] h-[21px] bg-[#b9b9b9] text-white">
            <svg width="10" height="10" viewBox="0 0 10 10"><path d="M1 1l8 8M9 1l-8 8" stroke="#fff" strokeWidth="1.800" /></svg>
          </div>
        </div>
      </div>
      {/* Menu */}
      <div className="flex items-center h-[21px] pt-[1px] shrink-0 bg-[#ededed] border-b border-[#b9b9b9] text-[11px] text-[#939393]">
        <svg className="ml-[5px]" width="15" height="15" viewBox="0 0 15 15"><rect x="1.500" y="1.500" width="12" height="12" fill="#e8f2fb" stroke="#4a7fb0" /><path d="M3 10l2-4 2 3 2-4 3 5" fill="none" stroke="#4a7fb0" /></svg>
        <span className="ml-[8px] w-[34px]">File</span>
        <span className="w-[41px]">View</span>
        <span className="w-[43px]">Insert</span>
        <span className="w-[49px]">Charts</span>
        <span className="w-[44px]">Tools</span>
        <span className="w-[57px]">Window</span>
        <span>Help</span>
        <div className="flex-1" />
        <div className="flex items-center gap-[2px] pr-[2px]">
          <span className="flex items-center justify-center w-[17px] h-[17px] bg-[#d3e5f3] border border-[#a4c4de]"><span className="w-[6px] h-[2px] bg-[#5f7d96] mt-[5px]" /></span>
          <span className="flex items-center justify-center w-[17px] h-[17px] bg-[#d3e5f3] border border-[#a4c4de]"><span className="w-[7px] h-[7px] border border-[#5f7d96]" /></span>
          <span className="flex items-center justify-center w-[17px] h-[17px] bg-[#d3e5f3] border border-[#a4c4de]">
            <svg width="8" height="8" viewBox="0 0 8 8"><path d="M1 1l6 6M7 1L1 7" stroke="#5f7d96" strokeWidth="1.500" /></svg>
          </span>
        </div>
      </div>
      <Toolbar />
      <div className="h-[3px] shrink-0 bg-white" />
      {/* Chart */}
      <div className="flex h-[905px] shrink-0">
        <div className="w-[4px] shrink-0 border-l-2 border-[#a9a9a9] bg-white" />
        <div className="flex flex-col w-[1869px] shrink-0">
          <div className="relative h-[761px] border border-black">
            <MainChart />
            <Legend />
          </div>
          <div className="h-px bg-white" />
          <div className="relative h-[143px] border border-black">
            <AdxChart />
            <div className="absolute left-[4px] top-[2px] text-[10px] tracking-[-0.2px] text-black">ADX(14) 15.2790 +DI:15.9838 -DI:16.5994</div>
          </div>
        </div>
        <div className="flex flex-col w-[42px] shrink-0">
          <div className="h-[762px]"><PriceAxis /></div>
          <div className="h-[143px]"><AdxAxis /></div>
        </div>
        <div className="w-[5px] shrink-0 bg-[#a3a3a3]" />
      </div>
      {/* Dates */}
      <div className="flex h-[20px] shrink-0 pl-[4px] text-[10px] tracking-[-0.3px] text-black">
        {DATES.map((d) => (
          <div key={d} className="w-[64px] shrink-0">
            <div className="w-px h-[3px] ml-px bg-black" />
            <div className="mt-[1px] leading-[12px] whitespace-nowrap">{d}</div>
          </div>
        ))}
        <div className="flex-1" />
        <div className="w-[5px] shrink-0 bg-[#a3a3a3]" />
      </div>
      {/* Tabs */}
      <div className="flex h-[19px] shrink-0 pl-[4px] bg-[#eeeeee] border-t border-[#333] text-[10.500px] text-[#8c8c8c] overflow-hidden">
        {TABS.map(([t, w, active], i) => (
          <div key={i} className={`flex items-center justify-center shrink-0 ${w} ${active ? "bg-white text-black border-x border-b border-black -mt-px" : i === 11 || i === 12 ? "" : "border-r border-[#b4b4b4] h-[14px] mt-[2px]"}`}>{t}</div>
        ))}
        <div className="flex items-center gap-[11px] pl-[3px] text-black">
          <span className="w-0 h-0 border-y-[4px] border-y-transparent border-r-[4px] border-r-black" />
          <span className="w-0 h-0 border-y-[4px] border-y-transparent border-l-[4px] border-l-black" />
        </div>
      </div>
      {/* Status */}
      <div className="flex items-center h-[22px] pt-[3px] shrink-0 bg-[#eeeeee] text-[11.500px] text-[#1a1a1a]">
        <div className="w-[1194px] shrink-0 pl-[2px]">For Help, press F1</div>
        <StatusCell w="w-[117px]">Default</StatusCell>
        <StatusCell w="w-[102px]">2012.06.17 00:00</StatusCell>
        <StatusCell w="w-[70px]">O: 1628.61</StatusCell>
        <StatusCell w="w-[71px]">H: 1633.26</StatusCell>
        <StatusCell w="w-[68px]">L: 1557.91</StatusCell>
        <StatusCell w="w-[70px]">C: 1572.36</StatusCell>
        <StatusCell w="w-[66px]">V: 222227</StatusCell>
        <div className="flex items-center h-full shrink-0 border-l border-[#b4b4b4] pl-[5px] w-[75px]">
          <svg width="24" height="14" viewBox="0 0 24 14">
            {Array.from({ length: 12 }, (_, i) => (
              <g key={i}>
                <rect x={i * 2} y={0} width="1.200" height={7} fill={i % 3 ? "#3aa23a" : "#d8c820"} />
                <rect x={i * 2} y={7} width="1.200" height={7} fill="#1f5fa0" />
              </g>
            ))}
          </svg>
        </div>
        <div>1982/4 kb</div>
      </div>
      <Taskbar />
    </div>
  );
}
